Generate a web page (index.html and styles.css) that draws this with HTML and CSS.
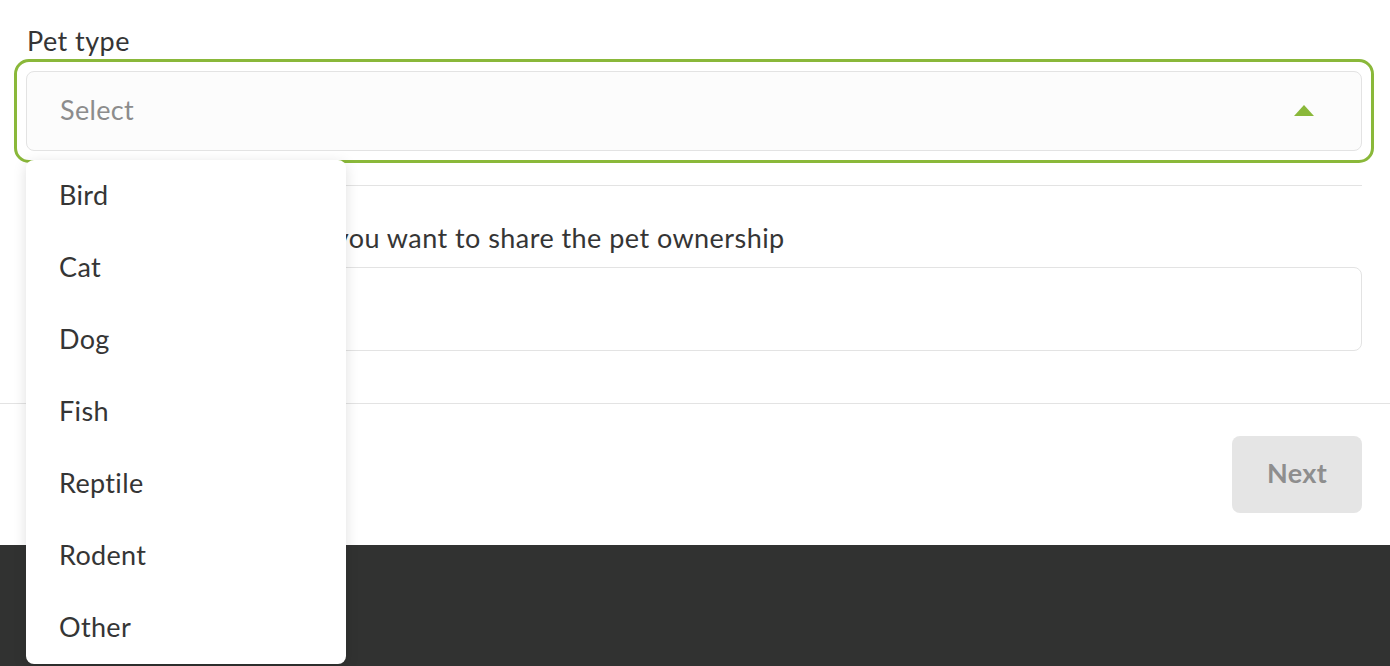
FILE: index.html
```html
<!DOCTYPE html>
<html lang="en">
<head>
<meta charset="utf-8">
<title>Pet type</title>
<link rel="stylesheet" href="styles.css">
</head>
<body>
<div class="page">
  <div class="form">
    <div class="field">
      <label class="label">Pet type</label>
      <div class="ring">
        <div class="select">
          <span class="placeholder">Select</span>
          <svg class="caret" width="20" height="11" viewBox="0 0 20 11"><polygon points="0,11 10,0 20,11" fill="#8ab83a"/></svg>
        </div>
      </div>
      <ul class="menu">
        <li class="option">Bird</li>
        <li class="option">Cat</li>
        <li class="option">Dog</li>
        <li class="option">Fish</li>
        <li class="option">Reptile</li>
        <li class="option">Rodent</li>
        <li class="option">Other</li>
      </ul>
    </div>
    <hr class="divider">
    <div class="field second">
      <label class="label">Email of user with whom you want to share the pet ownership</label>
      <div class="input"></div>
    </div>
  </div>
  <div class="actions">
    <button class="next" type="button">Next</button>
  </div>
  <div class="footer"></div>
</div>
</body>
</html>
```
FILE: styles.css
```css
* { box-sizing: border-box; }
html, body { margin: 0; padding: 0; background: #fff; }
body {
  font-family: "Lato", "Noto Sans", sans-serif;
  color: #353535;
  width: 1390px;
  height: 666px;
  overflow: hidden;
}
.page { display: flex; flex-direction: column; height: 666px; }
.form { padding: 26px 28px 0 26px; }
.field { position: relative; }
.label {
  display: block;
  font-size: 27px;
  letter-spacing: 0.45px;
  line-height: 30px;
  margin: 0 0 3px 1px;
  white-space: nowrap;
}
.ring {
  margin: 0 -12px;
  border: 3px solid #8ab83a;
  border-radius: 15px;
  padding: 9px;
}
.select {
  height: 80px;
  border: 1px solid #e3e3e3;
  border-radius: 8px;
  background: #fcfcfc;
  display: flex;
  align-items: center;
  justify-content: space-between;
  padding: 0 47px 0 33px;
}
.placeholder { font-size: 27px; letter-spacing: 0.35px; color: #8c8c8c; margin-top: -3px; }
.caret { display: block; margin-top: -2px; }
.menu {
  position: absolute;
  left: 0;
  top: 134px;
  width: 320px;
  margin: 0;
  padding: 0;
  list-style: none;
  background: #fff;
  border-radius: 8px;
  box-shadow: 0 3px 14px rgba(0, 0, 0, 0.13);
  z-index: 5;
}
.option {
  height: 72px;
  display: flex;
  align-items: center;
  padding: 0 0 3px 33px;
  font-size: 27px;
  letter-spacing: 0.35px;
  color: #353535;
}
.divider {
  border: 0;
  border-top: 1px solid #e3e3e3;
  margin: 22px 0 0;
}
.second { margin-top: 37px; }
.second .label { margin-bottom: 14px; }
.input {
  height: 84px;
  border: 1px solid #e3e3e3;
  border-radius: 8px;
  background: #fff;
}
.actions {
  margin-top: 52px;
  border-top: 1px solid #e3e3e3;
  display: flex;
  justify-content: flex-end;
  padding: 32px 28px 32px 0;
}
.next {
  width: 130px;
  height: 77px;
  border: 0;
  border-radius: 8px;
  background: #e5e5e5;
  color: #8e8e8e;
  font-family: inherit;
  font-size: 27px;
  letter-spacing: 0.35px;
  font-weight: 700;
  padding: 0 0 4px;
}
.footer { flex: 1; background: #313231; }
```
